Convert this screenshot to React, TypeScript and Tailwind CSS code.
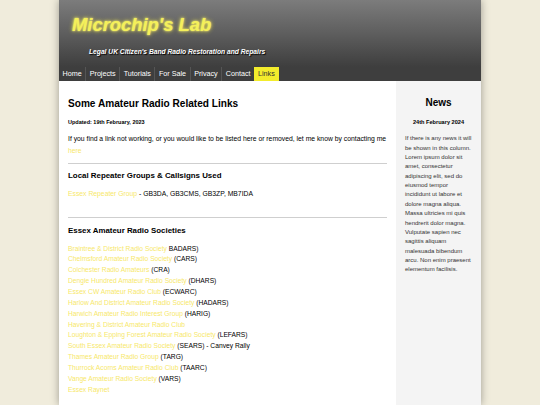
import React from "react";

const societies: [string, string][] = [
  ["Braintree & District Radio Society", " BADARS)"],
  ["Chelmsford Amateur Radio Society", " (CARS)"],
  ["Colchester Radio Amateurs", " (CRA)"],
  ["Dengie Hundred Amateur Radio Society", " (DHARS)"],
  ["Essex CW Amateur Radio Club", " (ECWARC)"],
  ["Harlow And District Amateur Radio Society", " (HADARS)"],
  ["Harwich Amateur Radio Interest Group", " (HARIG)"],
  ["Havering & District Amateur Radio Club", ""],
  ["Loughton & Epping Forest Amateur Radio Society", " (LEFARS)"],
  ["South Essex Amateur Radio Society", " (SEARS) - Canvey Rally"],
  ["Thames Amateur Radio Group", " (TARG)"],
  ["Thurrock Acorns Amateur Radio Club", " (TAARC)"],
  ["Vange Amateur Radio Society", " (VARS)"],
  ["Essex Raynet", ""],
];

const navItems = ["Home", "Projects", "Tutorials", "For Sale", "Privacy", "Contact", "Links"];

export default function App() {
  return (
    <div className="min-h-screen bg-[#f0ecdc] font-['Liberation_Sans',Arial,sans-serif]">
      <div className="mx-auto w-[422px] bg-white shadow-[0_0_8px_rgba(0,0,0,0.35)]">
        {/* header */}
        <div className="h-[67px] bg-gradient-to-b from-[#7c7c7c] via-[#5e5e5e] to-[#3e3e3e] pl-[13px] pt-[14px]">
          <div className="text-[18.4px] font-bold italic leading-[22px] text-[#f4f05a] [text-shadow:0_0_4px_#e8e040,0_0_2px_#fff6a0]">
            Microchip's Lab
          </div>
          <div className="mt-[12px] pl-[17px] text-[6.7px] font-bold italic leading-[8px] text-white [text-shadow:1px_1px_1px_#000]">
            Legal UK Citizen's Band Radio Restoration and Repairs
          </div>
        </div>

        {/* nav */}
        <div className="flex h-[14px] items-stretch bg-[#3e3e3e]">
          {navItems.map((item, i) => (
            <div
              key={item}
              className={
                item === "Links"
                  ? "flex items-center bg-[#f3ec2c] px-[4px] text-[7.2px] text-[#333]"
                  : "flex items-center border-r border-[#555] px-[3.5px] text-[7.2px] text-white" + (i === 5 ? " border-r-0" : "")
              }
            >
              {item}
            </div>
          ))}
        </div>

        {/* body */}
        <div className="flex">
          <div className="w-[337px] px-[9px] pb-[10px] pt-[16px]">
            <h1 className="text-[10.1px] font-bold leading-[14px] text-black">Some Amateur Radio Related Links</h1>
            <p className="mt-[7.5px] text-[5.5px] font-bold leading-[7px] text-black">Updated: 19th February, 2023</p>
            <p className="mt-[7.5px] text-[6.8px] leading-[12px] text-black">
              If you find a link not working, or you would like to be listed here or removed, let me know by contacting me{" "}
              <span className="text-[#f7e86a]">here</span>
            </p>
            <hr className="mt-[6px] border-t border-[#cfcfcf]" />
            <h2 className="mt-[7px] text-[7.9px] font-bold leading-[10px] text-black">Local Repeater Groups &amp; Callsigns Used</h2>
            <p className="mt-[9px] text-[6.8px] leading-[8px] text-black">
              <span className="text-[#f7e86a]">Essex Repeater Group</span> - GB3DA, GB3CMS, GB3ZP, MB7IDA
            </p>
            <hr className="mt-[19px] border-t border-[#cfcfcf]" />
            <h2 className="mt-[8px] text-[7.9px] font-bold leading-[10px] text-black">Essex Amateur Radio Societies</h2>
            <div className="mt-[7.6px] text-[6.7px] leading-[10.85px] text-black">
              {societies.map(([name, tag]) => (
                <div key={name}>
                  <span className="text-[#f7e86a]">{name}</span>
                  {tag}
                </div>
              ))}
            </div>
          </div>

          <div className="w-[85px] bg-[#f4f4f4] px-[9px] pt-[15px] pb-[10px]">
            <h3 className="text-center text-[10px] font-bold leading-[14px] text-black">News</h3>
            <p className="mt-[8.5px] text-center text-[5.6px] font-bold leading-[7px] text-black">24th February 2024</p>
            <p className="mt-[8.8px] text-[6px] leading-[9.36px] text-[#333]">
              If there is any news it will be shown in this column. Lorem ipsum dolor sit amet, consectetur adipiscing elit, sed do eiusmod tempor incididunt ut labore et dolore magna aliqua. Massa ultricies mi quis hendrerit dolor magna. Vulputate sapien nec sagittis aliquam malesuada bibendum arcu. Non enim praesent elementum facilisis.
            </p>
          </div>
        </div>
      </div>
    </div>
  );
}
